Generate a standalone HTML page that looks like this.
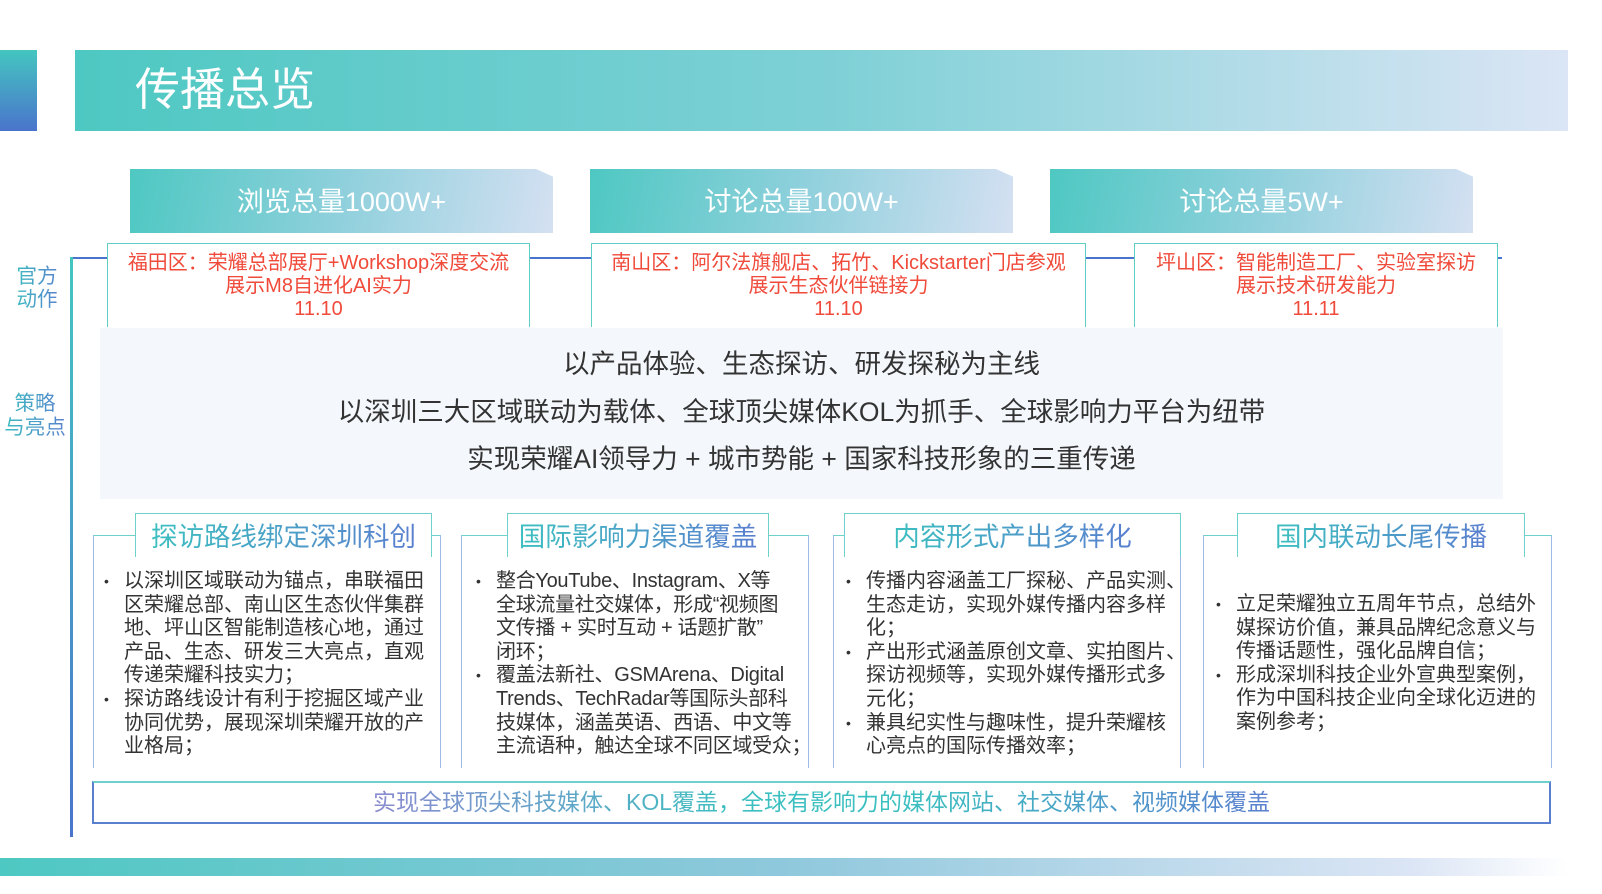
<!DOCTYPE html>
<html><head><meta charset="utf-8"><style>
*{margin:0;padding:0;box-sizing:border-box}
body{width:1602px;height:894px;background:#fff;position:relative;overflow:hidden;font-family:"Liberation Sans","Noto Sans CJK SC",sans-serif}
.a{position:absolute}
.tab{position:absolute;top:169px;height:64px;width:423px;background:linear-gradient(100deg,#4ec8c2,#8fd0dc 50%,#d4e0f2);clip-path:polygon(0 0,96% 0,100% 12%,100% 100%,0 100%);color:#fff;font-size:27px;text-align:center;line-height:66px}
.off{position:absolute;top:243px;height:84px;border:1.5px solid #5fcfc6;border-bottom:none;background:#fff;color:#f04a3a;font-size:20px;line-height:23px;text-align:center;padding-top:8px;white-space:nowrap}
.gt{background:linear-gradient(90deg,#3cbfc0,#5a7fcf);-webkit-background-clip:text;background-clip:text;color:transparent}
.card{position:absolute;top:535px;height:233px;border:1.5px solid #6fd1cb;border-bottom:none;border-left-color:#9fb9e6;border-right-color:#9fb9e6}
.ttl{position:absolute;top:513px;height:44px;background:#fff;border:1.5px solid #6fd1cb;border-bottom:none;font-size:26.5px;line-height:46px;text-align:center;white-space:nowrap}
ul{position:absolute;list-style:none;font-size:20px;line-height:23.6px;color:#333;white-space:nowrap}
li{position:relative;padding-left:24px}
li:before{content:"•";position:absolute;left:4px;font-size:14px}
</style></head><body>
<div class="a" style="left:0;top:50px;width:37px;height:81px;background:linear-gradient(180deg,#44c6c0,#4a74cc)"></div>
<div class="a" style="left:75px;top:50px;width:1493px;height:81px;background:linear-gradient(90deg,#4ec8c2,#7dd0d6 50%,#dbe5f5)"></div>
<div class="a" style="left:135px;top:62px;color:#fff;font-size:45px;line-height:56px">传播总览</div>

<div class="tab" style="left:130px">浏览总量1000W+</div>
<div class="tab" style="left:590px">讨论总量100W+</div>
<div class="tab" style="left:1050px">讨论总量5W+</div>

<div class="a" style="left:70px;top:257px;width:1432px;height:2px;background:#4a74cc"></div>
<div class="a" style="left:70px;top:257px;width:2.5px;height:580px;background:linear-gradient(180deg,#44c6c0,#4a74cc)"></div>
<div class="a gt" style="left:12px;top:265px;font-size:20.5px;line-height:23px;text-align:center;width:50px">官方<br>动作</div>
<div class="a gt" style="left:2px;top:392px;font-size:20.5px;line-height:24px;text-align:center;width:66px">策略<br>与亮点</div>

<div class="off" style="left:107px;width:423px">福田区：荣耀总部展厅+Workshop深度交流<br>展示M8自进化AI实力<br>11.10</div>
<div class="off" style="left:591px;width:495px">南山区：阿尔法旗舰店、拓竹、Kickstarter门店参观<br>展示生态伙伴链接力<br>11.10</div>
<div class="off" style="left:1134px;width:364px">坪山区：智能制造工厂、实验室探访<br>展示技术研发能力<br>11.11</div>

<div class="a" style="left:100px;top:328px;width:1403px;height:171px;background:#f4f8fc;text-align:center;color:#333;font-size:26.5px;line-height:47.5px;padding-top:13px;white-space:nowrap">以产品体验、生态探访、研发探秘为主线<br>以深圳三大区域联动为载体、全球顶尖媒体KOL为抓手、全球影响力平台为纽带<br>实现荣耀AI领导力 + 城市势能 + 国家科技形象的三重传递</div>

<div class="card" style="left:93px;width:348px"></div>
<div class="ttl" style="left:135px;width:297px"><span class="gt">探访路线绑定深圳科创</span></div>
<ul style="left:100px;top:570px"><li>以深圳区域联动为锚点，串联福田<br>区荣耀总部、南山区生态伙伴集群<br>地、坪山区智能制造核心地，通过<br>产品、生态、研发三大亮点，直观<br>传递荣耀科技实力；</li><li>探访路线设计有利于挖掘区域产业<br>协同优势，展现深圳荣耀开放的产<br>业格局；</li></ul>

<div class="card" style="left:461px;width:348px"></div>
<div class="ttl" style="left:507px;width:262px"><span class="gt">国际影响力渠道覆盖</span></div>
<ul style="left:472px;top:570px;letter-spacing:-0.3px"><li>整合YouTube、Instagram、X等<br>全球流量社交媒体，形成“视频图<br>文传播 + 实时互动 + 话题扩散”<br>闭环；</li><li>覆盖法新社、GSMArena、Digital<br>Trends、TechRadar等国际头部科<br>技媒体，涵盖英语、西语、中文等<br>主流语种，触达全球不同区域受众；</li></ul>

<div class="card" style="left:833px;width:348px"></div>
<div class="ttl" style="left:844px;width:337px"><span class="gt">内容形式产出多样化</span></div>
<ul style="left:842px;top:570px"><li>传播内容涵盖工厂探秘、产品实测、<br>生态走访，实现外媒传播内容多样<br>化；</li><li>产出形式涵盖原创文章、实拍图片、<br>探访视频等，实现外媒传播形式多<br>元化；</li><li>兼具纪实性与趣味性，提升荣耀核<br>心亮点的国际传播效率；</li></ul>

<div class="card" style="left:1203px;width:349px"></div>
<div class="ttl" style="left:1237px;width:288px"><span class="gt">国内联动长尾传播</span></div>
<ul style="left:1212px;top:593px"><li>立足荣耀独立五周年节点，总结外<br>媒探访价值，兼具品牌纪念意义与<br>传播话题性，强化品牌自信；</li><li>形成深圳科技企业外宣典型案例，<br>作为中国科技企业向全球化迈进的<br>案例参考；</li></ul>

<div class="a" style="left:92px;top:781px;width:1459px;height:43px;border:2px solid #5a7fcf;border-top-color:#6fd1cb;text-align:center;font-size:23px;line-height:39px;white-space:nowrap"><span style="background:linear-gradient(90deg,#8a8ad0,#3cbfc0 40%,#3cbfc0 60%,#5a7fcf);-webkit-background-clip:text;background-clip:text;color:transparent">实现全球顶尖科技媒体、KOL覆盖，全球有影响力的媒体网站、社交媒体、视频媒体覆盖</span></div>

<div class="a" style="left:0;top:858px;width:1568px;height:18px;background:linear-gradient(90deg,#4ec8c2,#8fc8dc 50%,#dbe5f5 90%,#fff)"></div>
</body></html>
